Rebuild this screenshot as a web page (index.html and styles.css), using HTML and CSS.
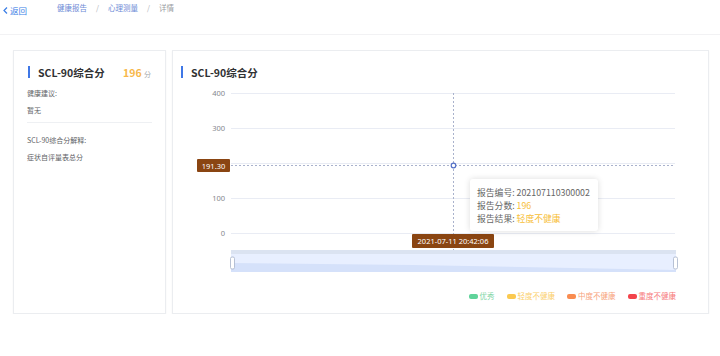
FILE: index.html
```html
<!DOCTYPE html>
<html lang="zh-CN">
<head>
    <meta charset="UTF-8">
    <meta name="viewport" content="width=device-width, initial-scale=1.0">
    <title>心理测量详情</title>
    <link rel="stylesheet" href="styles.css">
</head>
<body>
    <!-- top bar: back link + breadcrumb -->
    <div class="topbar">
        <a class="back" href="#">
            <svg width="5" height="7" viewBox="0 0 5 7"><path d="M4 0.5 L1 3.5 L4 6.5" fill="none" stroke="#3a7ee6" stroke-width="1.2"/></svg>
            返回
        </a>
        <div class="crumbs">
            <span class="crumb-link">健康报告</span>
            <span class="sep">/</span>
            <span class="crumb-link">心理测量</span>
            <span class="sep">/</span>
            <span class="crumb-last">详情</span>
        </div>
    </div>

    <div class="main">
        <!-- summary card -->
        <div class="card side">
            <div class="card-title">
                <span class="title-text">SCL-90综合分</span>
                <span class="score">196 <small>分</small></span>
            </div>
            <p class="label">健康建议:</p>
            <p class="value">暂无</p>
            <hr class="divider">
            <p class="label">SCL-90综合分解释:</p>
            <p class="value">症状自评量表总分</p>
        </div>

        <!-- chart card -->
        <div class="card chart-card">
            <div class="card-title">
                <span class="title-text">SCL-90综合分</span>
            </div>
            <div class="chart">
                <svg class="plot" width="535" height="196" viewBox="0 0 535 196">
                    <g class="grid">
                        <line x1="58" y1="9.5" x2="502" y2="9.5"/>
                        <line x1="58" y1="44.5" x2="502" y2="44.5"/>
                        <line x1="58" y1="79.5" x2="502" y2="79.5"/>
                        <line x1="58" y1="114.5" x2="502" y2="114.5"/>
                        <line x1="58" y1="149.5" x2="502" y2="149.5"/>
                    </g>
                    <g class="ylabels">
                        <text x="52" y="12">400</text>
                        <text x="52" y="47">300</text>
                        <text x="52" y="117">100</text>
                        <text x="52" y="152">0</text>
                    </g>
                    <!-- cross pointer -->
                    <line class="pointer" x1="58" y1="81.5" x2="502" y2="81.5"/>
                    <line class="pointer" x1="280.5" y1="9" x2="280.5" y2="166"/>
                    <circle class="dot" cx="280.5" cy="81.5" r="2.3"/>

                    <rect class="tag" x="24" y="75" width="33" height="13" rx="1"/>
                    <text class="tag-text" x="40.5" y="84.5">191.30</text>
                    <rect class="tag" x="239" y="150" width="82" height="14" rx="1"/>
                    <text class="tag-text" x="280" y="160">2021-07-11 20:42:06</text>

                    <!-- data zoom slider -->
                    <rect x="58" y="166" width="445" height="22" fill="#e8efff"/>
                    <rect x="58" y="166" width="445" height="4" fill="#dbe3f1"/>
                    <path d="M58 179 L240 181 L503 186 L503 188 L58 188 Z" fill="#d5e1fa"/>
                    <rect class="handle" x="57.5" y="173" width="4" height="12" rx="1.5"/>
                    <rect class="handle" x="500.5" y="173" width="4" height="12" rx="1.5"/>
                </svg>

                <div class="tooltip">
                    <div>报告编号: 202107110300002</div>
                    <div>报告分数: <span class="warn">196</span></div>
                    <div>报告结果: <span class="warn">轻度不健康</span></div>
                </div>

                <div class="legend">
                    <span class="item good"><i></i>优秀</span>
                    <span class="item mild"><i></i>轻度不健康</span>
                    <span class="item mid"><i></i>中度不健康</span>
                    <span class="item bad"><i></i>重度不健康</span>
                </div>
            </div>
        </div>
    </div>
</body>
</html>
```
FILE: styles.css
```css
/* page base */
body {
    margin: 0;
    background-color: #fff;
    font-family: "Noto Sans CJK SC", "Noto Sans", sans-serif;
    color: #606266;
}

p {
    margin: 0;
}

/* top bar */
.topbar {
    height: 35px;
    border-bottom: 1px solid #f2f2f4;
    display: flex;
    align-items: flex-start;
    box-sizing: border-box;
}

.back {
    display: flex;
    align-items: center;
    gap: 2px;
    color: #3a7ee6;
    text-decoration: none;
    font-size: 8.5px;
    line-height: 11px;
    margin: 5px 0 0 3px;
}

.crumbs {
    display: flex;
    gap: 7px;
    font-size: 7.5px;
    line-height: 10px;
    margin: 3px 0 0 30px;
}

.crumb-link {
    color: #6d8bd6;
}

.sep {
    color: #b0b3b8;
    margin: 0 2px;
}

.crumb-last {
    color: #9a9ca2;
}

/* cards */
.main {
    display: flex;
    gap: 6px;
    padding: 15px 11px 0 13px;
}

.card {
    border: 1px solid #ebedf0;
    box-shadow: 0 1px 2px rgba(0, 0, 0, 0.04);
    height: 264px;
    box-sizing: border-box;
    background: #fff;
}

.side {
    width: 153px;
    padding: 15px 13px 0 13px;
}

.chart-card {
    flex: 1;
    padding-top: 15px;
}

.card-title {
    display: flex;
    align-items: center;
    height: 12px;
    border-left: 2px solid #3f77e6;
    padding-left: 8px;
    margin-bottom: 10px;
}

.side .card-title {
    margin-left: 1px;
}

.chart-card .card-title {
    margin-left: 8px;
    margin-bottom: 6px;
}

.title-text {
    font-size: 10.5px;
    font-weight: bold;
    color: #303133;
}

.score {
    margin-left: auto;
    margin-right: 1px;
    font-size: 10.5px;
    font-weight: bold;
    color: #f7b84b;
}

.score small {
    font-size: 7px;
    font-weight: normal;
    color: #a5a7ab;
}

.label,
.value {
    font-size: 7px;
    line-height: 10px;
    color: #606266;
}

.label {
    margin-bottom: 7px;
}

.divider {
    border: none;
    border-top: 1px solid #eef0f3;
    margin: 7px 0 12px 0;
}

/* chart */
.chart {
    position: relative;
}

.plot {
    display: block;
}

.grid line {
    stroke: #e9ecf4;
    stroke-width: 1;
}

.ylabels text {
    font-size: 7.5px;
    fill: #85878d;
    text-anchor: end;
    font-family: "Noto Sans", sans-serif;
}

.pointer {
    stroke: #a9b2cc;
    stroke-width: 1;
    stroke-dasharray: 2 2;
}

.dot {
    fill: #fff;
    stroke: #5470c6;
    stroke-width: 1.2;
}

.tag {
    fill: #8a4512;
}

.tag-text {
    fill: #fff;
    font-size: 7.5px;
    text-anchor: middle;
    font-family: "Noto Sans", sans-serif;
}

.handle {
    fill: #fff;
    stroke: #a7b2c9;
    stroke-width: 0.8;
}

.tooltip {
    position: absolute;
    left: 297px;
    top: 95px;
    width: 128px;
    height: 52px;
    box-sizing: border-box;
    padding: 7px 0 0 7px;
    background: #fff;
    border-radius: 3px;
    box-shadow: 0 0 6px rgba(0, 0, 0, 0.14);
    font-size: 8.8px;
    line-height: 13px;
    color: #666;
}

.warn {
    color: #f7c03a;
}

/* legend */
.legend {
    display: flex;
    justify-content: flex-end;
    gap: 12px;
    padding: 11px 32px 0 0;
    font-size: 7.5px;
    line-height: 10px;
}

.item {
    display: flex;
    align-items: center;
    gap: 2px;
}

.item i {
    display: inline-block;
    width: 9px;
    height: 5px;
    border-radius: 2px;
}

.good { color: #7fd6a6; }
.good i { background: #5fd39a; }
.mild { color: #fbd06d; }
.mild i { background: #fbc94f; }
.mid { color: #f8a37c; }
.mid i { background: #f98c50; }
.bad { color: #f77b7b; }
.bad i { background: #f3434b; }
```
